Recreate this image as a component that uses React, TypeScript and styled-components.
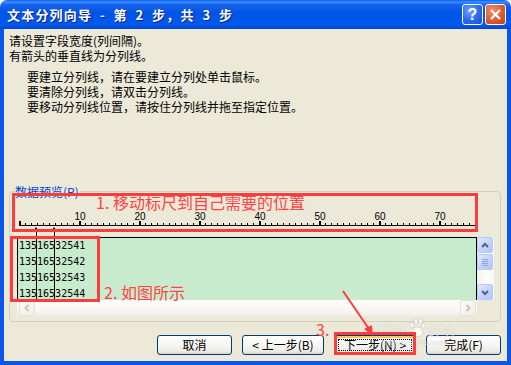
import React from "react";
import styled, { createGlobalStyle } from "styled-components";

const cjk = `"Noto Sans CJK SC", "Noto Sans", sans-serif`;

const GlobalStyle = createGlobalStyle`
  html, body {
    margin: 0;
    padding: 0;
    background: #ffffff;
  }
  body {
    font-family: ${cjk};
  }
`;

const Window = styled.div`
  position: relative;
  width: 511px;
  height: 365px;
  display: flex;
  flex-direction: column;
  overflow: hidden;
`;

const TitleBar = styled.div`
  height: 29px;
  flex-shrink: 0;
  display: flex;
  align-items: center;
  gap: 2px;
  padding: 0 5px 0 7px;
  border-radius: 7px 7px 0 0;
  background: linear-gradient(
    180deg,
    #0a5ef5 0%,
    #3d8ffc 7%,
    #1763ee 16%,
    #0054e3 45%,
    #0059ef 85%,
    #0047d0 100%
  );
`;

const TitleText = styled.span`
  flex: 1;
  color: #ffffff;
  font: 700 13px/1 ${cjk};
  letter-spacing: 1.2px;
  white-space: pre;
  text-shadow: 1px 1px 0 #0a1f8a;
`;

const CaptionButton = styled.div<{ $kind: "help" | "close" }>`
  width: 21px;
  height: 21px;
  box-sizing: border-box;
  border: 1px solid #ffffff;
  border-radius: 3px;
  display: flex;
  align-items: center;
  justify-content: center;
  color: #ffffff;
  font: 700 16px/1 "Liberation Sans", sans-serif;
  background: ${(p) =>
    p.$kind === "close"
      ? "radial-gradient(circle at 35% 30%, #f0916e 0%, #e05a30 55%, #c13a16 100%)"
      : "radial-gradient(circle at 35% 30%, #6fa2ff 0%, #2a68f0 55%, #1a4fd6 100%)"};
`;

const Frame = styled.div`
  flex: 1;
  display: flex;
  flex-direction: column;
  background: #ece9d8;
  border-style: solid;
  border-color: #0b55e8;
  border-width: 0 4px 4px 4px;
  color: #000000;
  font: 400 12px/15px ${cjk};
`;

const Instructions = styled.div`
  padding: 4px 0 0 5px;
`;

const Line = styled.div`
  white-space: nowrap;
`;

const IndentGroup = styled.div`
  margin-top: 6px;
  padding-left: 18px;
`;

const GroupBox = styled.div`
  position: relative;
  height: 131px;
  box-sizing: border-box;
  margin: 77px 6px 0 5px;
  padding: 5px 0 0 7px;
  border: 1px solid #d0d0bf;
  border-radius: 4px;
`;

const Legend = styled.span`
  position: absolute;
  top: -8px;
  left: 4px;
  padding: 0 1px;
  background: #ece9d8;
  color: #0046d5;
`;

const Preview = styled.div`
  position: relative;
  width: 477px;
`;

const Ruler = styled.svg`
  display: block;
`;

const PreviewGrid = styled.div`
  display: grid;
  grid-template-columns: 460px 17px;
  grid-template-rows: 63px 16px;
`;

const DataBox = styled.div`
  box-sizing: border-box;
  overflow: hidden;
  background: #c9ebcd;
  border: 1px solid #000000;
  border-bottom: none;
  padding-left: 1px;
  font: 400 10px/16px "DejaVu Sans Mono", "Liberation Mono", monospace;
  color: #000000;
`;

const Marker = styled.div`
  position: absolute;
  top: 33px;
  width: 1px;
  height: 70px;
  background: #000000;

  &::before {
    content: "";
    position: absolute;
    top: -3px;
    left: -2px;
    border-left: 2.5px solid transparent;
    border-right: 2.5px solid transparent;
    border-bottom: 3px solid #000000;
  }
`;

const VScroll = styled.div`
  display: flex;
  flex-direction: column;
  justify-content: space-between;
  background: linear-gradient(90deg, #f3f1ec 0%, #fefefb 60%, #f6f5f0 100%);
`;

const VTop = styled.div`
  display: flex;
  flex-direction: column;
  gap: 1px;
`;

const ScrollButton = styled.div<{ $disabled?: boolean }>`
  width: 16px;
  height: 16px;
  box-sizing: border-box;
  border-radius: 2px;
  display: flex;
  align-items: center;
  justify-content: center;
  border: 1px solid ${(p) => (p.$disabled ? "#e4e2d8" : "#b8cbf6")};
  background: ${(p) =>
    p.$disabled
      ? "linear-gradient(135deg, #fbfbf8 0%, #efede6 100%)"
      : "linear-gradient(135deg, #e2ebfe 0%, #c4d5fb 50%, #b2c7f6 100%)"};
`;

const HScroll = styled.div`
  display: flex;
  align-items: center;
  justify-content: space-between;
  padding: 0 1px 0 2px;
  background: linear-gradient(180deg, #fefefd 0%, #f7f6f2 60%, #efeee8 100%);
`;

const ButtonRow = styled.div`
  display: flex;
  justify-content: flex-end;
  gap: 10px;
  margin-top: 13px;
  padding-right: 6px;
`;

const WizardButton = styled.div<{ $width: number; $focused?: boolean }>`
  position: relative;
  width: ${(p) => p.$width}px;
  height: 20px;
  box-sizing: border-box;
  display: flex;
  align-items: center;
  justify-content: center;
  border: 1px solid #003c74;
  border-radius: 3px;
  background: linear-gradient(180deg, #ffffff 0%, #f7f7f4 45%, #ecebe5 85%, #d8d2c6 100%);
  box-shadow: ${(p) => (p.$focused ? "inset 0 0 0 2px #f9c86b" : "none")};
  font: 400 12px/1 ${cjk};
  white-space: pre;

  &::after {
    content: "";
    display: ${(p) => (p.$focused ? "block" : "none")};
    position: absolute;
    inset: 3px;
    border: 1px dotted #000000;
  }
`;

const RedBox = styled.div`
  position: absolute;
  box-sizing: border-box;
  border: 3px solid #ff3c3c;
`;

const RedNote = styled.span`
  position: absolute;
  color: #ff4444;
  font: 400 16px/16px ${cjk};
  white-space: nowrap;
`;

const Watermark = styled.div`
  position: absolute;
  left: 378px;
  top: 318px;
  display: flex;
  flex-direction: column;
  align-items: flex-start;
  color: rgba(255, 255, 255, 0.65);
  text-shadow: 0 0 1px rgba(150, 150, 150, 0.5);
  pointer-events: none;
`;

const WatermarkMain = styled.div`
  display: flex;
  align-items: flex-end;
  gap: 2px;
  font: 700 18px/18px "Liberation Sans", sans-serif;
`;

const WatermarkCjk = styled.span`
  font: 400 14px/16px ${cjk};
`;

const WatermarkUrl = styled.span`
  font: 400 8px/10px "Liberation Sans", sans-serif;
  margin-left: 4px;
`;

const rows = ["13516532541", "13516532542", "13516532543", "13516532544"];

const ticks = Array.from({ length: 77 }, (_, i) => i);

const Chevron = ({ dir, color }: { dir: "up" | "down" | "left" | "right"; color: string }) => {
  const pts = {
    up: "4,9 7,6 10,9",
    down: "4,6 7,9 10,6",
    left: "8.5,4 5.5,7 8.5,10",
    right: "5.5,4 8.5,7 5.5,10",
  }[dir];
  return (
    <svg width="14" height="14" viewBox="0 0 14 14">
      <polyline points={pts} fill="none" stroke={color} strokeWidth="2" />
    </svg>
  );
};

const Grip = () => (
  <svg width="14" height="14" viewBox="0 0 14 14">
    {[4, 6, 8, 10].map((y) => (
      <line key={y} x1="4" x2="10" y1={y + 0.5} y2={y + 0.5} stroke="#8ea4d8" strokeWidth="1" />
    ))}
  </svg>
);

const sp = "\u2002";

export default function App() {
  return (
    <>
      <GlobalStyle />
      <Window>
        <TitleBar>
          <TitleText>{`文本分列向导${sp}-${sp}第${sp}2${sp}步，共${sp}3${sp}步`}</TitleText>
          <CaptionButton $kind="help">?</CaptionButton>
          <CaptionButton $kind="close">
            <svg width="13" height="13" viewBox="0 0 13 13">
              <path d="M2 2 L11 11 M11 2 L2 11" stroke="#ffffff" strokeWidth="2.2" />
            </svg>
          </CaptionButton>
        </TitleBar>

        <Frame>
          <Instructions>
            <Line>请设置字段宽度(列间隔)。</Line>
            <Line>有箭头的垂直线为分列线。</Line>
            <IndentGroup>
              <Line>要建立分列线，请在要建立分列处单击鼠标。</Line>
              <Line>要清除分列线，请双击分列线。</Line>
              <Line>要移动分列线位置，请按住分列线并拖至指定位置。</Line>
            </IndentGroup>
          </Instructions>

          <GroupBox>
            <Legend>数据预览(P)</Legend>
            <Preview>
              <Ruler width="460" height="40" viewBox="0 0 460 40">
                <rect x="2" y="28" width="457" height="1" fill="#000" />
                {ticks.map((i) =>
                  i % 10 === 0 ? (
                    <rect key={i} x={2 + i * 6} y="24" width="2" height="5" fill="#000" />
                  ) : (
                    <rect key={i} x={2 + i * 6} y="26" width="1" height="3" fill="#000" />
                  )
                )}
                {[1, 2, 3, 4, 5, 6, 7].map((k) => (
                  <text
                    key={k}
                    x={3 + k * 60}
                    y="23"
                    textAnchor="middle"
                    fontFamily="Liberation Sans, sans-serif"
                    fontSize="10"
                    fill="#000"
                  >
                    {k * 10}
                  </text>
                ))}
              </Ruler>
              <PreviewGrid>
                <DataBox>
                  {rows.map((r) => (
                    <div key={r}>{r}</div>
                  ))}
                </DataBox>
                <VScroll>
                  <VTop>
                    <ScrollButton>
                      <Chevron dir="up" color="#4d6185" />
                    </ScrollButton>
                    <ScrollButton>
                      <Grip />
                    </ScrollButton>
                  </VTop>
                  <ScrollButton>
                    <Chevron dir="down" color="#4d6185" />
                  </ScrollButton>
                </VScroll>
                <HScroll>
                  <ScrollButton $disabled>
                    <Chevron dir="left" color="#c9c7ba" />
                  </ScrollButton>
                  <ScrollButton $disabled>
                    <Chevron dir="right" color="#c9c7ba" />
                  </ScrollButton>
                </HScroll>
              </PreviewGrid>
              <Marker style={{ left: 19 }} />
              <Marker style={{ left: 37 }} />
            </Preview>
          </GroupBox>

          <ButtonRow>
            <WizardButton $width={75}>取消</WizardButton>
            <WizardButton $width={82}>{"< 上一步(B)"}</WizardButton>
            <WizardButton $width={82} $focused>
              {"下一步(N) >"}
            </WizardButton>
            <WizardButton $width={75}>完成(F)</WizardButton>
          </ButtonRow>
        </Frame>

        <Watermark>
          <WatermarkMain>
            Bai
            <svg width="18" height="20" viewBox="0 0 18 20">
              <g fill="rgba(255,255,255,0.7)" stroke="rgba(150,150,150,0.45)" strokeWidth="0.6">
                <ellipse cx="4" cy="7" rx="2" ry="2.6" />
                <ellipse cx="8" cy="3.5" rx="2" ry="2.6" />
                <ellipse cx="12.5" cy="3.5" rx="2" ry="2.6" />
                <ellipse cx="15.5" cy="7.5" rx="2" ry="2.6" />
                <path d="M9.5 9 C5 9 3 15 5 17 C7 19 12 19 14 17 C16 15 14 9 9.5 9 Z" />
              </g>
            </svg>
            <WatermarkCjk>经验</WatermarkCjk>
          </WatermarkMain>
          <WatermarkUrl>jingyan.baidu.com</WatermarkUrl>
        </Watermark>

        <RedBox style={{ left: 12, top: 193, width: 466, height: 39 }} />
        <RedBox style={{ left: 10, top: 236, width: 90, height: 66 }} />
        <RedBox style={{ left: 334, top: 332, width: 82, height: 23 }} />
        <RedNote style={{ left: 96, top: 194 }}>1. 移动标尺到自己需要的位置</RedNote>
        <RedNote style={{ left: 104, top: 284 }}>2. 如图所示</RedNote>
        <RedNote style={{ left: 316, top: 321 }}>3.</RedNote>
        <svg
          width="50"
          height="60"
          viewBox="0 0 50 60"
          style={{ position: "absolute", left: 335, top: 285 }}
        >
          <line x1="8" y1="6" x2="34" y2="44" stroke="#ff3c3c" strokeWidth="2" />
          <polygon points="38,51 29,44 37,40" fill="#ff3c3c" />
        </svg>
      </Window>
    </>
  );
}
